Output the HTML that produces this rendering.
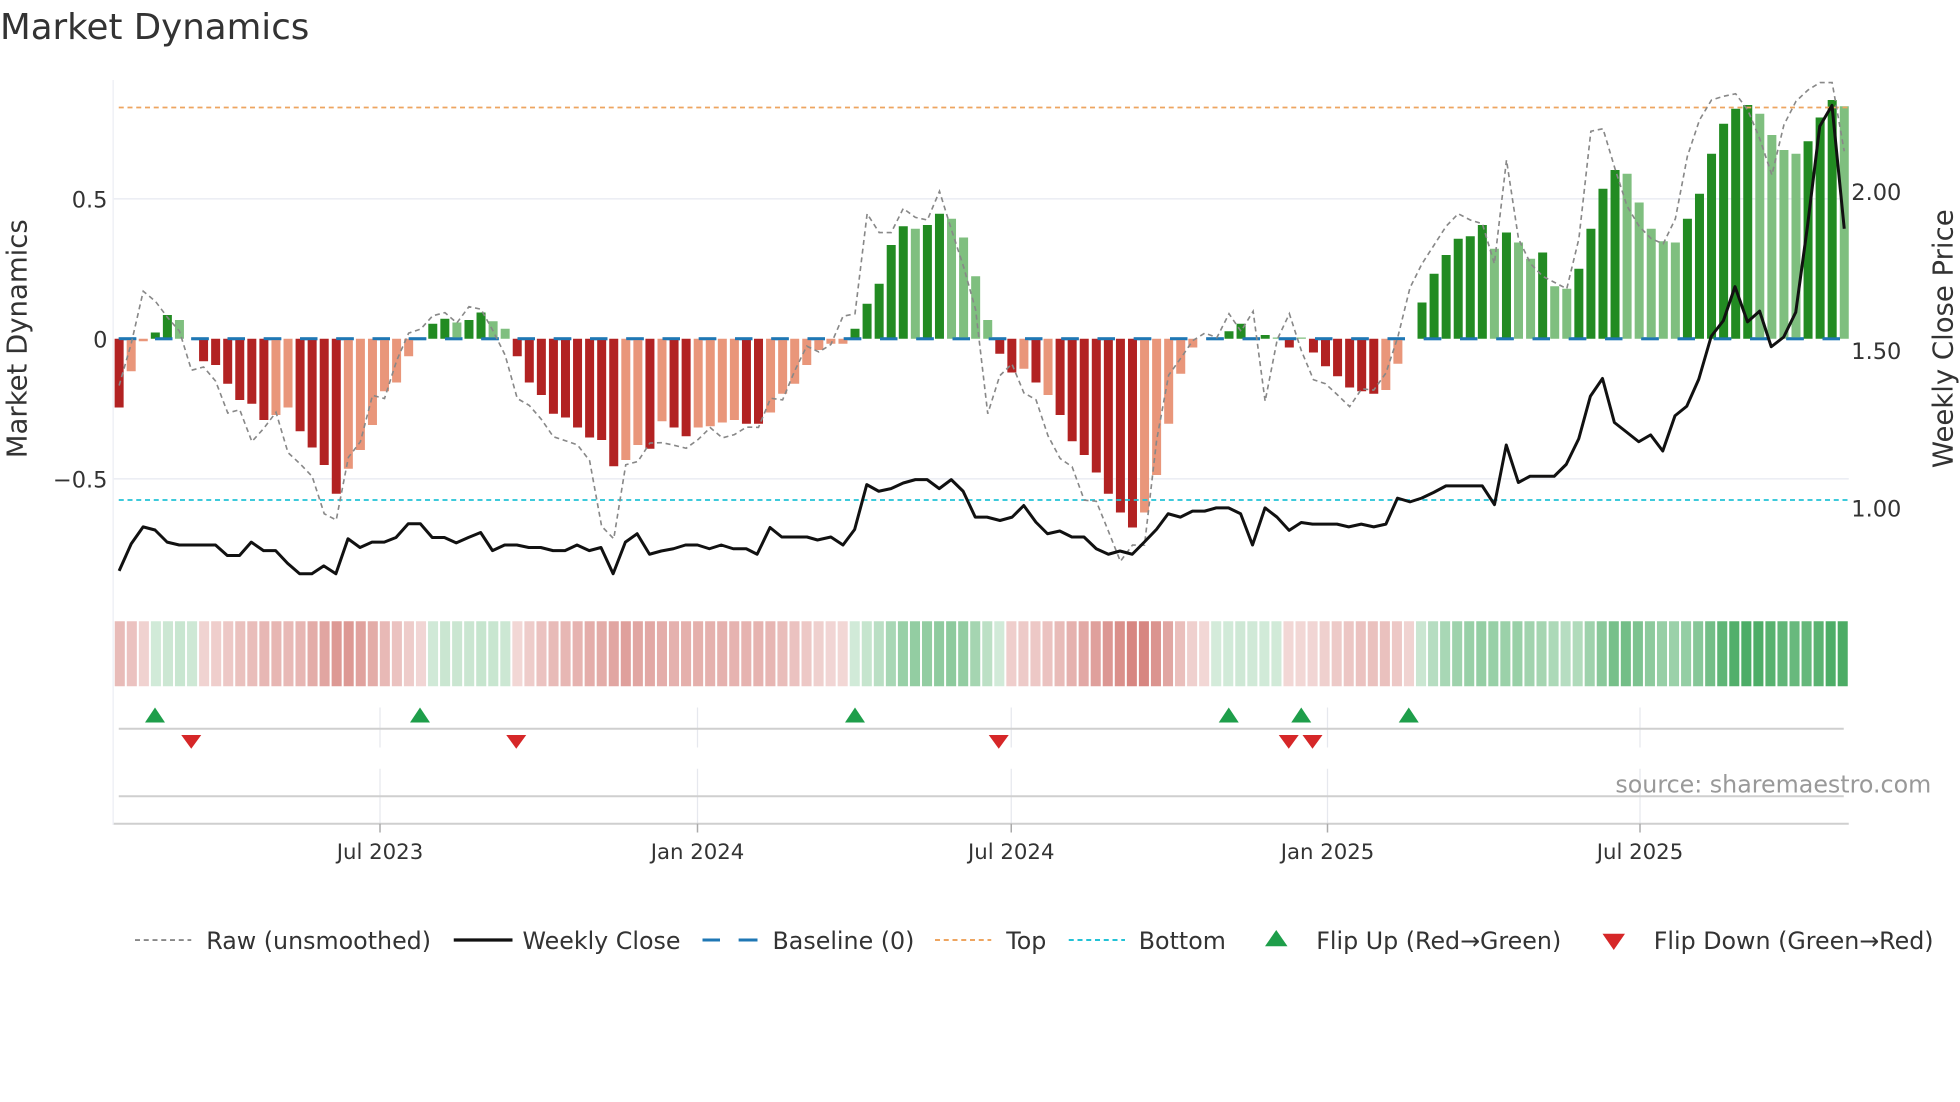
<!DOCTYPE html>
<html><head><meta charset="utf-8">
<style>
html,body{margin:0;padding:0;background:#fff;width:1960px;height:1102px;overflow:hidden}
svg{display:block;font-family:"DejaVu Sans","Liberation Sans",sans-serif}
</style></head>
<body>
<svg id="c" xmlns="http://www.w3.org/2000/svg" width="1960" height="1102" viewBox="0 0 1568 881.6" preserveAspectRatio="none">
<rect width="1568" height="882" fill="#fff"/>
<text x="0" y="31" font-size="28.5" fill="#333">Market Dynamics</text>
<line x1="91" y1="159" x2="1479" y2="159" stroke="#eceef4" stroke-width="1.3"/>
<line x1="91" y1="383" x2="1479" y2="383" stroke="#eceef4" stroke-width="1.3"/>
<line x1="90.5" y1="64" x2="90.5" y2="660" stroke="#eceef4" stroke-width="1"/>
<g id="base"></g>
<g id="bars"></g>
<line x1="95" y1="86" x2="1479" y2="86" stroke="#eea560" stroke-width="1.4" stroke-dasharray="4,3"/>
<line x1="95" y1="400" x2="1479" y2="400" stroke="#22c2d6" stroke-width="1.4" stroke-dasharray="4,3"/>
<path id="raw" fill="none" stroke="#888" stroke-width="1.3" stroke-dasharray="4,3"/>
<path id="price" fill="none" stroke="#111" stroke-width="2.4" stroke-linejoin="round"/>
<g font-size="18" fill="#333">
<text x="86" y="166" text-anchor="end">0.5</text>
<text x="86" y="278" text-anchor="end">0</text>
<text x="86" y="390" text-anchor="end">−0.5</text>
<text x="1481" y="160">2.00</text>
<text x="1481" y="287">1.50</text>
<text x="1481" y="413">1.00</text>
</g>
<text transform="translate(21,271) rotate(-90)" text-anchor="middle" font-size="22" fill="#333">Market Dynamics</text>
<text transform="translate(1562,271) rotate(-90)" text-anchor="middle" font-size="22" fill="#333">Weekly Close Price</text>
<g id="heat"></g>
<g stroke="#e6e8ee" stroke-width="1">
<line x1="304" y1="566" x2="304" y2="598"/><line x1="558" y1="566" x2="558" y2="598"/><line x1="809" y1="566" x2="809" y2="598"/><line x1="1062" y1="566" x2="1062" y2="598"/><line x1="1312" y1="566" x2="1312" y2="598"/>
<line x1="304" y1="615" x2="304" y2="659"/><line x1="558" y1="615" x2="558" y2="659"/><line x1="809" y1="615" x2="809" y2="659"/><line x1="1062" y1="615" x2="1062" y2="659"/><line x1="1312" y1="615" x2="1312" y2="659"/>
</g>
<line x1="95" y1="583" x2="1475" y2="583" stroke="#cfcfcf" stroke-width="1.6"/>
<line x1="95" y1="637" x2="1475" y2="637" stroke="#cfcfcf" stroke-width="1.6"/>
<line x1="91" y1="659" x2="1479" y2="659" stroke="#cfcfcf" stroke-width="1.6"/>
<g stroke="#aaa" stroke-width="1.2">
<line x1="304" y1="659" x2="304" y2="666"/><line x1="558" y1="659" x2="558" y2="666"/><line x1="809" y1="659" x2="809" y2="666"/><line x1="1062" y1="659" x2="1062" y2="666"/><line x1="1312" y1="659" x2="1312" y2="666"/>
</g>
<g id="flips"></g>
<g font-size="17" fill="#333" text-anchor="middle">
<text x="304" y="687">Jul 2023</text><text x="558" y="687">Jan 2024</text><text x="809" y="687">Jul 2024</text><text x="1062" y="687">Jan 2025</text><text x="1312" y="687">Jul 2025</text>
</g>
<text x="1545" y="634" text-anchor="end" font-size="19" fill="#999">source: sharemaestro.com</text>
<g font-size="19" fill="#333">
<line x1="108" y1="752" x2="153" y2="752" stroke="#888" stroke-width="1.5" stroke-dasharray="4,3"/>
<text x="165" y="759">Raw (unsmoothed)</text>
<line x1="363" y1="752" x2="410" y2="752" stroke="#111" stroke-width="2.6"/>
<text x="418" y="759">Weekly Close</text>
<line x1="562" y1="752" x2="606" y2="752" stroke="#1f77b4" stroke-width="2.4" stroke-dasharray="14,15"/>
<line x1="591" y1="752" x2="606" y2="752" stroke="#1f77b4" stroke-width="2.4"/>
<text x="618" y="759">Baseline (0)</text>
<line x1="748" y1="752" x2="793" y2="752" stroke="#eea560" stroke-width="1.6" stroke-dasharray="4,3"/>
<text x="805" y="759">Top</text>
<line x1="855" y1="752" x2="900" y2="752" stroke="#22c2d6" stroke-width="1.6" stroke-dasharray="4,3"/>
<text x="911" y="759">Bottom</text>
<path d="M1012,757 L1030,757 L1021,744 Z" fill="#1e9e4a"/>
<text x="1053" y="759">Flip Up (Red→Green)</text>
<path d="M1282,747 L1300,747 L1291,760 Z" fill="#d62728"/>
<text x="1323" y="759">Flip Down (Green→Red)</text>
</g>
</svg>
<script>
(function(){
var NS="http://www.w3.org/2000/svg";
function el(p,tag,a){var e=document.createElementNS(NS,tag);for(var k in a)e.setAttribute(k,a[k]);p.appendChild(e);return e;}
var S="D-55 L-26 L-2 G5 G19 g15 0 D-18 D-21 D-36 D-49 D-52 D-65 L-61 L-55 D-74 D-87 D-101 D-124 L-104 L-89 L-69 L-42 L-35 L-14 0 G12 G16 g13 G15 G21 g14 g8 D-14 D-35 D-45 D-60 D-63 D-71 D-79 D-81 D-102 L-97 L-85 D-88 L-66 D-71 D-78 L-71 L-70 L-67 L-65 D-68 D-68 L-59 L-44 L-36 L-21 L-9 L-4 L-4 G8 G28 G44 G75 G90 g88 G91 G100 g96 g81 g50 g15 D-12 D-27 L-24 D-35 L-45 D-61 D-82 D-93 D-107 D-124 D-139 D-151 L-139 L-109 L-68 L-28 L-7 0 0 G6 G12 0 G3 g1 D-7 g1 D-11 D-22 D-30 D-39 D-42 D-44 L-41 L-20 0 G29 G52 G67 G80 G82 G91 g72 G85 g77 g64 G69 g42 g40 G56 G88 G120 G135 g132 g109 g88 g78 g77 G96 G116 G148 G172 G184 G187 g180 g163 g151 g148 G158 G177 G191 g186".split(" ");
var col={D:"#b22222",L:"#e9967a",G:"#228b22",g:"#7fbf7f"};
var N=S.length, x0=95.3, dx=(1475.4-95.3)/(N-1), Y0=271, bw=7.2;
var bars=document.getElementById("bars"), base=document.getElementById("base");
for(var x=95;x<1475;x+=29) el(base,"line",{x1:x,y1:Y0,x2:Math.min(x+14,1479),y2:Y0,stroke:"#1f77b4","stroke-width":2.4});
var vals=[];
for(var i=0;i<N;i++){
 var t=S[i], c=t.charAt(0), v=0;
 if(c==="0"){vals.push(0);continue;}
 v=parseFloat(t.slice(1)); vals.push(v);
 var xc=x0+i*dx;
 if(v>0) el(bars,"rect",{x:xc-bw/2,y:Y0-v,width:bw,height:v,fill:col[c]});
 else el(bars,"rect",{x:xc-bw/2,y:Y0,width:bw,height:-v,fill:col[c]});
}
for(var x=95;x<1475;x+=29) el(bars,"line",{x1:x,y1:Y0,x2:Math.min(x+14,1479),y2:Y0,stroke:"#1f77b4","stroke-width":2.2});
var ov={2:38,3:30,17:-140,18:-145,40:-150,41:-160,60:18,61:20,62:100,63:85,64:85,67:95,68:118,72:-60,81:-130,84:-165,85:-165,92:20,94:22,95:-50,97:20,101:-45,103:-40,
108:60,109:75,110:90,111:100,112:95,113:92,114:60,115:143,116:80,117:60,118:50,119:45,120:40,121:80,122:166,123:168,124:136,125:106,126:90,127:80,128:76,129:96,130:146,131:175,132:191,133:194,134:196,135:183,136:160,137:131,138:171,139:190,140:199,141:205,142:205,143:150};
var d="";
for(var i=0;i<N;i++){
 var r=(i+1<N?vals[i+1]:vals[i])*1.15+((i*37)%11-5)*1.5;
 if(ov[i]!==undefined) r=ov[i];
 d+=(i?"L":"M")+(x0+i*dx).toFixed(1)+","+(Y0-r).toFixed(1);
}
document.getElementById("raw").setAttribute("d",d);
var P=[[95.3,456.7],[105,435],[114.5,421.5],[124,424],[133.7,433.7],[143.4,436],[153,436],[162.6,436],[172.4,436],[181.8,444.4],[191.6,444.4],[201,433.7],[210.8,440.5],[220.5,440.5],[230,450.6],[239.7,459],[249.5,459],[259,452.7],[268.7,459],[278.4,431],[288,438],[297.6,433.7],[307.4,433.7],[316.8,430],[326.6,419],[336.3,419],[345.8,430],[355.5,430],[365,434.3],[374.7,430],[384.5,426],[394,440.5],[403.7,436],[413.5,436],[423,438],[432.6,438],[442.4,440.5],[452,440.5],[461.6,436],[471.4,440.5],[480.8,438],[490.5,459],[500.3,433.7],[509.7,427],[519.6,443.4],[529,440.8],[538.7,439],[548.4,436],[558,436],[567.5,439],[577,436],[586.6,439],[597,439],[605.7,443.4],[616,422],[625.4,429.6],[635,429.6],[645.6,429.6],[654,432],[664.7,429.6],[674.4,436],[683.7,423.6],[693.4,387.7],[703,393],[712.8,390.9],[722.6,386.4],[732.3,383.7],[741.7,383.7],[751.4,390.9],[761,383.7],[770.5,393],[780.2,413.7],[789.6,413.7],[800,416.4],[809.7,413.7],[819,404.4],[828.7,417.7],[838,427],[847.8,424.8],[857.5,429.6],[867.2,429.6],[877,439],[886.7,443.4],[896,440.8],[905.8,443.4],[915.5,433.6],[925.2,423.5],[934.5,411],[944.3,413.7],[954,408.9],[963.7,408.9],[973,406.3],[982.8,406.3],[992.5,411],[1002,436],[1012,406.3],[1021.6,413.7],[1031.3,424.3],[1041,418],[1050,419.3],[1060,419.3],[1069.6,419.3],[1079,421.5],[1089,419.3],[1099,421.5],[1108.7,419.3],[1118,398.5],[1128,401.5],[1137.3,398.5],[1147,393.9],[1156.8,388.7],[1166.6,388.7],[1176,388.7],[1185.8,388.7],[1195.6,403.7],[1205,356],[1214.7,386],[1224,381],[1234,381],[1243.4,381],[1253,371.5],[1263,351],[1272.3,317],[1282,302.8],[1291.5,338],[1301.3,345.7],[1311,353.4],[1320.5,347.9],[1330.2,360.8],[1340,332.6],[1349.4,325],[1359,303.4],[1369,269],[1378.7,256.5],[1388,229.3],[1398,257.5],[1407.7,248.9],[1417,277.4],[1426.9,269.7],[1436.6,249.8],[1446,180.8],[1455.8,101],[1465.6,84.3],[1475.4,183]];
var pd="";for(var i=0;i<P.length;i++)pd+=(i?"L":"M")+P[i][0]+","+P[i][1];
document.getElementById("price").setAttribute("d",pd);
var heat=document.getElementById("heat");
for(var i=0;i<N;i++){
 var v=vals[Math.max(0,i-1)]*0.5+vals[i]*0.5, f, a;
 if(v<0||(v===0&&i>0&&vals[i-1]<0)){a=0.2+0.45*Math.min(1,Math.abs(v)/150);f="rgb(192,66,58)";}
 else {a=0.22+0.7*Math.min(1,Math.abs(v)/190);f="rgb(58,164,86)";}
 var xc=91+(i+0.5)*(1388/N);
 el(heat,"rect",{x:xc-(1388/N-1.6)/2,y:497,width:1388/N-1.6,height:52,fill:f,"fill-opacity":a.toFixed(2)});
}
var fl=document.getElementById("flips");
[124,336,684,983,1041,1127].forEach(function(x){el(fl,"path",{d:"M"+(x-8)+",578 L"+(x+8)+",578 L"+x+",566 Z",fill:"#1e9e4a"});});
[153,413,799,1031,1050].forEach(function(x){el(fl,"path",{d:"M"+(x-8)+",588 L"+(x+8)+",588 L"+x+",599 Z",fill:"#d62728"});});
})();
</script>
</body></html>
